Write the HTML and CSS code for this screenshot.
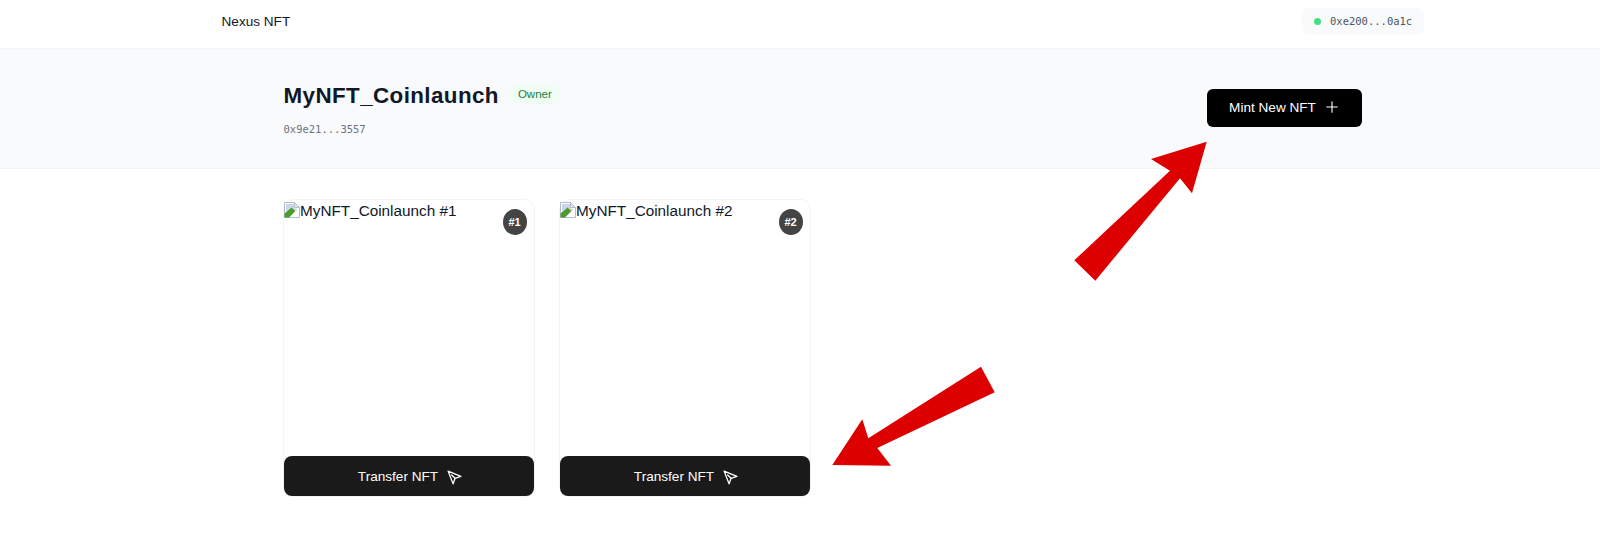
FILE: index.html
```html
<!DOCTYPE html>
<html lang="en">
<head>
    <meta charset="UTF-8">
    <meta name="viewport" content="width=device-width, initial-scale=1.0">
    <title>Nexus NFT</title>
    <link rel="stylesheet" href="styles.css">
</head>
<body>
    <header class="navbar">
        <span class="brand">Nexus NFT</span>
        <div class="wallet">
            <span class="wallet-dot"></span>
            <span class="mono">0xe200...0a1c</span>
        </div>
    </header>

    <section class="hero">
        <div>
            <div class="hero-title">
                <h1>MyNFT_Coinlaunch</h1>
                <span class="owner-badge">Owner</span>
            </div>
            <p class="mono contract">0x9e21...3557</p>
        </div>
        <button class="mint-btn">
            Mint New NFT
            <svg class="icon plus-icon" viewBox="0 0 24 24"><path d="M5 12h14M12 5v14"/></svg>
        </button>
    </section>

    <main class="nft-grid">
        <article class="nft-card">
            <div class="nft-image">
                <svg class="broken-img" viewBox="0 0 16 16"><path class="sheet" d="M.5.5h10l5 5v10H.5z"/><path class="sky" d="M2 2h8v4l3 1v2l-6-3-5 4z"/><path class="hill" d="M.5 15.5v-4l7-6 4 3.5-6.5 6.5z"/><path class="fold" d="M10.5.5v5h5z"/></svg><span class="alt-text">MyNFT_Coinlaunch #1</span>
                <span class="token-badge">#1</span>
            </div>
            <button class="transfer-btn">
                Transfer NFT
                <svg class="icon send-icon" viewBox="0 0 24 24"><path d="M3 3l7 18 2.8-7.8L21 10.5zM12.8 13.2L8 8.5"/></svg>
            </button>
        </article>
        <article class="nft-card">
            <div class="nft-image">
                <svg class="broken-img" viewBox="0 0 16 16"><path class="sheet" d="M.5.5h10l5 5v10H.5z"/><path class="sky" d="M2 2h8v4l3 1v2l-6-3-5 4z"/><path class="hill" d="M.5 15.5v-4l7-6 4 3.5-6.5 6.5z"/><path class="fold" d="M10.5.5v5h5z"/></svg><span class="alt-text">MyNFT_Coinlaunch #2</span>
                <span class="token-badge">#2</span>
            </div>
            <button class="transfer-btn">
                Transfer NFT
                <svg class="icon send-icon" viewBox="0 0 24 24"><path d="M3 3l7 18 2.8-7.8L21 10.5zM12.8 13.2L8 8.5"/></svg>
            </button>
        </article>
    </main>

    <!-- Annotation arrows drawn on top of the screenshot -->
    <svg class="arrows" viewBox="0 0 1600 546">
        <polygon points="1206.7,141.7 1151,159 1170,170.7 1074.3,260.3 1095.3,280.7 1180,178.3 1192,193.3"/>
        <polygon points="832.3,465 862.3,419.3 868.3,438.3 981,366.7 994.7,392.3 877.3,448 891,465.7"/>
    </svg>
</body>
</html>
```

FILE: styles.css
```css
* {
    box-sizing: border-box;
}
body {
    font-family: "Liberation Sans", Arial, sans-serif;
    margin: 0;
    height: 546px;
    overflow: hidden;
    background-color: white;
    color: #111827;
}
.mono {
    font-family: "DejaVu Sans Mono", monospace;
    font-size: 10.5px;
}
.navbar {
    height: 49px;
    padding: 0 176px 6px 221.5px;
    display: flex;
    justify-content: space-between;
    align-items: center;
    border-bottom: 1px solid #f3f4f6;
}
.brand {
    font-size: 13.6px;
    color: #111827;
}
.wallet {
    height: 26px;
    width: 122px;
    padding-left: 12px;
    display: flex;
    align-items: center;
    gap: 9px;
    background-color: #f9fafb;
    border-radius: 6px;
    color: #4b5563;
}
.wallet-dot {
    width: 7px;
    height: 7px;
    border-radius: 50%;
    background-color: #4ade80;
}
.hero {
    height: 120px;
    padding: 0 238px 0 283.5px;
    display: flex;
    justify-content: space-between;
    align-items: center;
    background-color: #f9fafb;
    border-bottom: 1px solid #f3f4f6;
}
.hero-title {
    display: flex;
    align-items: center;
    gap: 11px;
}
h1 {
    margin: 0;
    font-size: 22.4px;
    font-weight: bold;
    letter-spacing: 0.4px;
    color: #111827;
}
.owner-badge {
    padding: 3px 8px;
    margin-top: -2px;
    font-size: 11.5px;
    line-height: 13px;
    color: #15803d;
    background-color: #f0fdf4;
    border-radius: 10px;
}
.contract {
    margin: 14px 0 0;
    color: #6b7280;
}
.mint-btn {
    width: 155px;
    height: 38px;
    padding: 0 6px 2px 7px;
    margin-top: -1px;
    display: flex;
    justify-content: center;
    align-items: center;
    gap: 7px;
    background-color: black;
    color: white;
    border: none;
    border-radius: 6px;
    font-family: inherit;
    font-size: 13.6px;
}
.icon {
    width: 18px;
    height: 18px;
    fill: none;
    stroke: currentColor;
    stroke-linecap: round;
    stroke-linejoin: round;
}
.plus-icon {
    stroke-width: 1.5;
}
.send-icon {
    width: 17px;
    height: 17px;
    stroke-width: 1.9;
    margin-top: 3px;
}
.nft-grid {
    padding: 30px 0 0 283px;
    display: grid;
    grid-template-columns: 252px 252px;
    gap: 24px;
}
.nft-card {
    height: 298px;
    display: flex;
    flex-direction: column;
    border: 1px solid #f3f4f6;
    border-radius: 10px;
}
.nft-image {
    position: relative;
    flex: 1;
    padding-top: 2px;
    font-size: 15.3px;
    color: #111827;
}
.broken-img {
    width: 16px;
    height: 16px;
    vertical-align: -2px;
}
.sheet {
    fill: #fff;
    stroke: #b4bcc8;
}
.fold {
    fill: #e3e8ef;
    stroke: #b4bcc8;
}
.sky {
    fill: #c9d6ea;
}
.hill {
    fill: #4e9a2f;
}
.token-badge {
    position: absolute;
    top: 9px;
    right: 7.5px;
    width: 24px;
    height: 26px;
    display: flex;
    justify-content: center;
    align-items: center;
    border-radius: 50%;
    background-color: #444;
    color: white;
    font-size: 11px;
    font-weight: bold;
}
.transfer-btn {
    height: 40px;
    padding: 1px 6px 1px 8.5px;
    display: flex;
    justify-content: center;
    align-items: center;
    gap: 7.5px;
    background-color: #1a1a1a;
    color: white;
    border: none;
    border-radius: 8px;
    font-family: inherit;
    font-size: 13.6px;
}
.arrows {
    position: absolute;
    top: 0;
    left: 0;
    width: 1600px;
    height: 546px;
    fill: #dd0000;
    pointer-events: none;
}
```
